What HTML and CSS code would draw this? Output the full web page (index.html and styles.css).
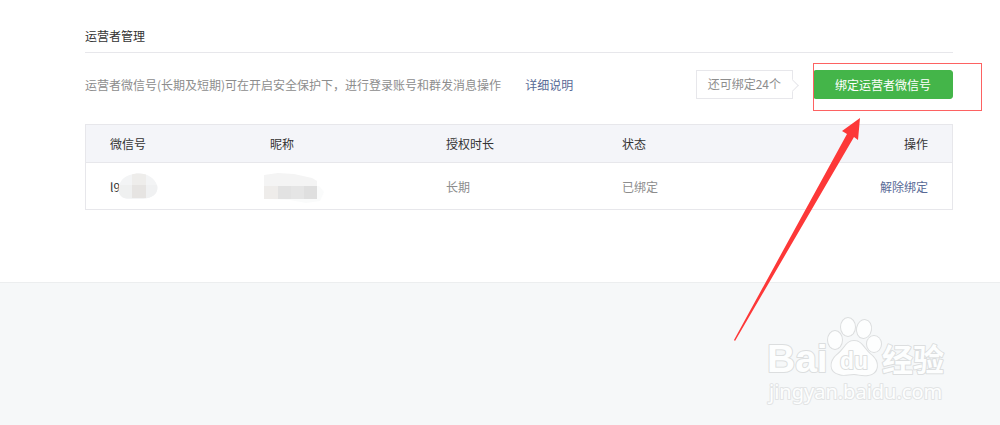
FILE: index.html
```html
<!DOCTYPE html>
<html lang="zh-CN">
<head>
<meta charset="utf-8">
<title>运营者管理</title>
<link rel="stylesheet" href="styles.css">
</head>
<body>
<main class="panel">
  <h1 class="title">运营者管理</h1>
  <div class="toolbar">
    <p class="desc">运营者微信号(长期及短期)可在开启安全保护下，进行登录账号和群发消息操作<a class="link more" href="#">详细说明</a></p>
    <span class="quota">还可绑定24个</span>
    <div class="action">
      <button class="bind" type="button">绑定运营者微信号</button>
      <span class="frame"></span>
    </div>
  </div>
  <table class="grid">
    <thead>
      <tr><th class="c-id">微信号</th><th class="c-name">昵称</th><th class="c-time">授权时长</th><th>状态</th><th class="c-op">操作</th></tr>
    </thead>
    <tbody>
      <tr>
        <td class="id"><div class="masked">l9<svg class="mask-id" width="42" height="30" viewBox="0 0 42 30" aria-hidden="true">
          <clipPath id="m1"><path d="M1 13C3 5 9 2 16 1C27-1 36 4 39 12C41 20 35 25 25 26L9 26C3 25-1 20 1 13Z"/></clipPath>
          <g clip-path="url(#m1)"><path fill="#f3f4f5" d="M0 0h42v26H0z"/><path fill="#eff0f0" d="M1 12h13v13H1z"/><path fill="#eeedeb" d="M14 0h14v12H14z"/><path fill="#e6e4e2" d="M14 12h14v13H14z"/><path fill="#f0f1f2" d="M28 12h12v13H28z"/></g>
        </svg></div></td>
        <td><svg class="mask-name" width="60" height="32" viewBox="0 0 60 32" aria-hidden="true">
          <path fill="#fafbfb" d="M0 13H55L60 19L56 28L42 30L26 27L0 26Z"/>
          <path fill="#f4f4f4" d="M0 2L14 0L30 1L48 5L53 8V13H0Z"/>
          <path fill="#eeecea" d="M0 13h14v13H0z"/><path fill="#e2e2e2" d="M14 13h13v13H14z"/><path fill="#e5e5e5" d="M27 13h13v13H27z"/><path fill="#dfdfdf" d="M40 13h13v13H40z"/>
        </svg></td>
        <td>长期</td><td>已绑定</td><td class="c-op"><a class="link" href="#">解除绑定</a></td>
      </tr>
    </tbody>
  </table>
</main>
<footer class="footer"></footer>
<svg class="arrow" width="128" height="226" viewBox="0 0 128 226" aria-hidden="true">
  <path fill="#fd3838" d="M127 1L109 14L114 17L1 223L2 224L121 20L125 23Z"/>
</svg>
<svg class="watermark" width="184" height="92" viewBox="0 0 184 92" role="img" aria-label="Baidu 经验">
  <g class="outlined">
    <text class="wm-bai" x="1" y="57">Bai</text>
    <ellipse cx="69" cy="25" rx="7" ry="9"/>
    <ellipse cx="82" cy="12" rx="7" ry="9"/>
    <ellipse cx="98" cy="14" rx="7" ry="9" transform="rotate(10 98 14)"/>
    <ellipse cx="108" cy="29" rx="7" ry="8"/>
    <path d="M88 26C96 26 98 34 104 39C115 47 112 59 102 60C96 61 92 59 88 59C82 59 78 61 73 59C64 57 63 47 71 40C79 34 80 26 88 26Z"/>
    <text class="wm-du" x="74" y="54">du</text>
    <text class="wm-cn" x="116" y="56">经验</text>
    <text class="wm-url" x="3" y="84">jingyan.baidu.com</text>
  </g>
</svg>
</body>
</html>
```
FILE: styles.css
```css
* { box-sizing: border-box; }
body {
  position: relative;
  display: flex;
  flex-direction: column;
  min-height: 100vh;
  margin: 0;
  background: #fff;
  color: #8d8d8d;
  font: 12px/20px "Noto Sans CJK SC", sans-serif;
}
.panel { padding: 26px 47px 72px 85px; }
.title {
  margin: 0;
  padding-bottom: 6px;
  border-bottom: 1px solid #e7e7eb;
  color: #333;
  font-size: 12px;
  font-weight: 400;
}
.toolbar {
  display: flex;
  align-items: center;
  gap: 20px;
  padding: 17px 0 25px;
}
.desc { flex: 1; margin: 0; }
.link { color: #596a96; text-decoration: none; }
.more { margin-left: 24px; }
.quota {
  position: relative;
  height: 29px;
  padding: 3px 11px;
  border: 1px solid #e7e7eb;
}
.quota::after {
  content: "";
  position: absolute;
  top: 10px;
  right: -5px;
  width: 8px;
  height: 8px;
  border: solid #e7e7eb;
  border-width: 1px 1px 0 0;
  background: #fff;
  transform: rotate(45deg);
}
.action { position: relative; }
.bind {
  display: block;
  width: 140px;
  height: 29px;
  padding: 0;
  border: 1px solid #44b549;
  border-radius: 3px;
  background: #44b549;
  color: #fff;
  font: inherit;
}
.frame {
  position: absolute;
  inset: -7px -29px -12px 0;
  border: 1px solid #fd6262;
  pointer-events: none;
}
.grid {
  width: 100%;
  border: 1px solid #e7e7eb;
  border-collapse: collapse;
  table-layout: fixed;
}
.grid th, .grid td {
  padding: 0 24px;
  font-weight: 400;
  text-align: left;
}
.grid th {
  height: 38px;
  border-bottom: 1px solid #e7e7eb;
  background: #f4f5f9;
  color: #333;
}
.grid td { height: 47px; padding-top: 2px; }
.grid .c-op { text-align: right; }
.c-id { width: 18.5%; }
.c-name, .c-time { width: 20.3%; }
.id { color: #333; }
.masked { position: relative; }
.mask-id { position: absolute; left: 8px; top: -4px; }
.mask-name { display: block; margin: 4px 0 0 -6px; }
.footer {
  flex: 1;
  border-top: 1px solid #eceeef;
  background: #f6f8f9;
}
.arrow { position: absolute; top: 117px; right: 139px; pointer-events: none; }
.watermark { position: absolute; top: 315px; right: 50px; pointer-events: none; }
.outlined {
  fill: #fdfefe;
  stroke: #dcdedf;
  stroke-width: 2px;
  stroke-linejoin: round;
  paint-order: stroke;
}
.wm-bai { font: bold 39px "Liberation Sans", sans-serif; }
.wm-du { font: bold 23px "Liberation Sans", sans-serif; }
.wm-cn { font: bold 31px "Noto Sans CJK SC", sans-serif; }
.wm-url { font: 20px "Noto Sans", sans-serif; stroke: #e2e4e5; }
```
